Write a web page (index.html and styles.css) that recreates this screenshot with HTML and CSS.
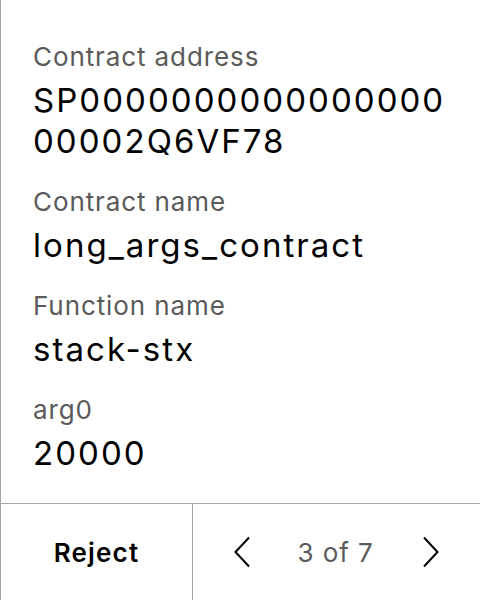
FILE: index.html
```html
<!DOCTYPE html>
<html>
<head>
<meta charset="utf-8">
<link rel="stylesheet" href="styles.css">
</head>
<body>
<div class="screen">
  <main class="details">
    <div class="field">
      <div class="label">Contract address</div>
      <div class="value">SP000000000000000000002Q6VF78</div>
    </div>
    <div class="field">
      <div class="label">Contract name</div>
      <div class="value">long_args_contract</div>
    </div>
    <div class="field">
      <div class="label">Function name</div>
      <div class="value">stack-stx</div>
    </div>
    <div class="field">
      <div class="label">arg0</div>
      <div class="value">20000</div>
    </div>
  </main>
  <footer class="footer">
    <div class="reject">Reject</div>
    <div class="pager">
      <svg class="chev" width="16" height="30" viewBox="0 0 16 30"><path d="M15 0.5 L1.5 15 L15 29.5" fill="none" stroke="#000" stroke-width="2"/></svg>
      <span class="count">3 of 7</span>
      <svg class="chev" width="16" height="30" viewBox="0 0 16 30"><path d="M1 0.5 L14.5 15 L1 29.5" fill="none" stroke="#000" stroke-width="2"/></svg>
    </div>
  </footer>
</div>
</body>
</html>
```

FILE: styles.css
```css
html, body {
  margin: 0;
  padding: 0;
  background: #fff;
}
body {
  font-family: Inter, "Noto Sans", sans-serif;
}
.screen {
  width: 480px;
  height: 600px;
  box-sizing: border-box;
  border-left: 1px solid #a6a6a6;
  display: flex;
  flex-direction: column;
}
.details {
  flex: 1;
  padding: 40px 20px 0 32px;
  display: flex;
  flex-direction: column;
  gap: 23px;
}
.field {
  display: flex;
  flex-direction: column;
  gap: 6px;
}
.label {
  font-size: 26px;
  line-height: 34px;
  letter-spacing: 0.9px;
  color: #5a5a5a;
}
.value {
  font-size: 33px;
  line-height: 41px;
  letter-spacing: 2.05px;
  color: #000;
  word-break: break-all;
}
.footer {
  height: 96px;
  border-top: 1px solid #a6a6a6;
  display: flex;
}
.reject {
  width: 191px;
  border-right: 1px solid #a6a6a6;
  display: flex;
  align-items: center;
  justify-content: center;
  font-size: 26px;
  font-weight: 600;
  letter-spacing: 1.2px;
  color: #000;
}
.pager {
  flex: 1;
  display: flex;
  align-items: center;
  justify-content: center;
}
.count {
  font-size: 26px;
  letter-spacing: 0.9px;
  color: #5a5a5a;
  margin: 0 49px 0 47px;
}
.chev {
  display: block;
  overflow: visible;
}
```
